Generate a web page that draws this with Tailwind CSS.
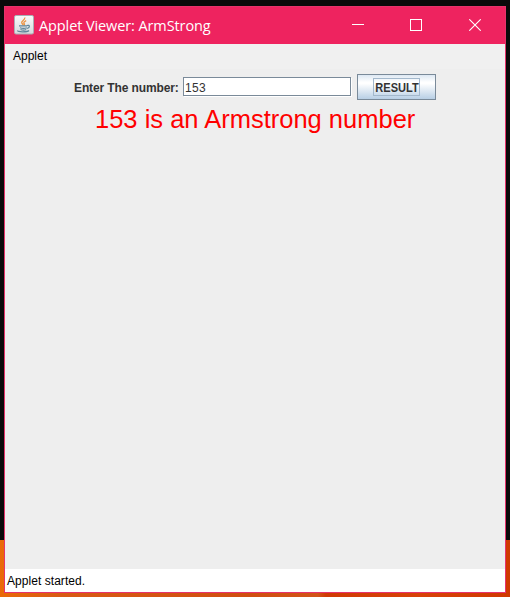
<!DOCTYPE html>
<html lang="en">
<head>
<meta charset="utf-8">
<title>Applet Viewer: ArmStrong</title>
<script src="https://cdn.jsdelivr.net/npm/@tailwindcss/browser@4"></script>
</head>
<body class="h-[597px] w-[510px] overflow-hidden bg-[linear-gradient(to_bottom,#0a0a0a_540px,transparent_540px),linear-gradient(to_right,#ea6a08_0px,#d95a14_60px,#d04e10_250px,#d25418_318px,#d03a04_326px,#d84208_420px,#cf3800_510px)] pt-[6px] pl-[4px] font-['Liberation_Sans',sans-serif] text-black">
<div class="flex h-[587px] w-[502px] flex-col border border-[#e6336b] bg-[#eeeeee]">
  <header class="flex h-[37px] shrink-0 items-center bg-[#ee235f] pl-[9px] text-white">
    <svg class="mb-[1px] h-5 w-5 shrink-0" viewBox="0 0 20 20" fill="none">
      <defs><linearGradient id="tile" x2="0" y2="1"><stop stop-color="#fafafa"/><stop offset="1" stop-color="#d5dadd"/></linearGradient></defs>
      <rect x=".5" y=".5" width="19" height="18.5" rx="1.5" fill="url(#tile)" stroke="#a9b0b5"/>
      <path d="M10.8 2.5C11.3 5 7.2 5.7 7.7 7.7c.2 1 1.4 1.4 1.3 2.5M12.2 5.6c-2.5 1.1-2.8 2.2-2 3.1.5.7.2 1.3-.4 1.7" stroke="#eb9343" stroke-width="1.3"/>
      <path d="M5 10.8h8.2M6 12.7c2 .8 5 .8 6.8 0M6.5 14.5c1.8.7 4.2.7 5.7 0M13 10.5c3-.9 3.3 1.8.1 3M3.7 15.4c-.9 1.8 9.5 2 11.3.1" stroke="#5f8499" stroke-width="1.2"/>
    </svg>
    <h1 class="ml-[5px] w-[173px] whitespace-nowrap font-['Open_Sans',sans-serif] text-[14.5px] leading-5 tracking-[-0.1px]">Applet Viewer: ArmStrong</h1>
    <div class="ml-auto flex items-center pr-[24px] pb-px">
      <svg class="h-3 w-3" viewBox="0 0 12 12"><path d="M0 5.5h12" stroke="#fff"/></svg>
      <svg class="ml-[46px] h-3 w-3" viewBox="0 0 12 12" fill="none"><rect x=".5" y=".5" width="11" height="11" stroke="#fff"/></svg>
      <svg class="ml-[47px] h-3 w-3" viewBox="0 0 12 12"><path d="M.3.3 11.7 11.7M11.7.3.3 11.7" stroke="#fff" stroke-width="1.1"/></svg>
    </div>
  </header>
  <nav class="h-[25px] shrink-0 bg-[#f0f0f0] pt-[4px] pl-[8px] text-[12px] leading-4">Applet</nav>
  <main class="flex-1 pt-[5px]">
    <form class="flex h-[26px] items-center pl-[69px]">
      <label for="num" class="w-[109px] whitespace-nowrap pt-px text-[12px] font-bold leading-4 tracking-[-0.12px] text-[#333333]">Enter The number:</label>
      <input id="num" value="153" class="mb-px h-[19px] w-[168px] border border-[#7a8a99] bg-white px-px pt-[2px] text-[12px] tracking-[0.3px] text-[#333333] shadow-[1px_1px_0_#fff] outline-none">
      <button type="button" class="ml-[6px] flex h-[26px] w-[79px] items-center justify-center border border-[#7a8a99] bg-[linear-gradient(to_bottom,#dde8f3_0%,#ffffff_30%,#ffffff_36%,#b8cfe5_100%)] text-[12px] font-bold text-[#333333]"><span class="flex h-[18px] w-[47px] items-center justify-center whitespace-nowrap border border-[#a3b8cc] pt-px"><span class="w-[50px] shrink-0 scale-x-[0.92] text-center">RESULT</span></span></button>
    </form>
    <p class="pt-[4px] pl-[90px] whitespace-nowrap text-[25.5px] leading-[30px] text-[#ff0000]">153 is an Armstrong number</p>
  </main>
  <footer class="h-[23px] shrink-0 bg-white pt-[4px] pl-[2px] text-[12px] leading-4 tracking-[0.05px]">Applet started.</footer>
</div>
</body>
</html>
